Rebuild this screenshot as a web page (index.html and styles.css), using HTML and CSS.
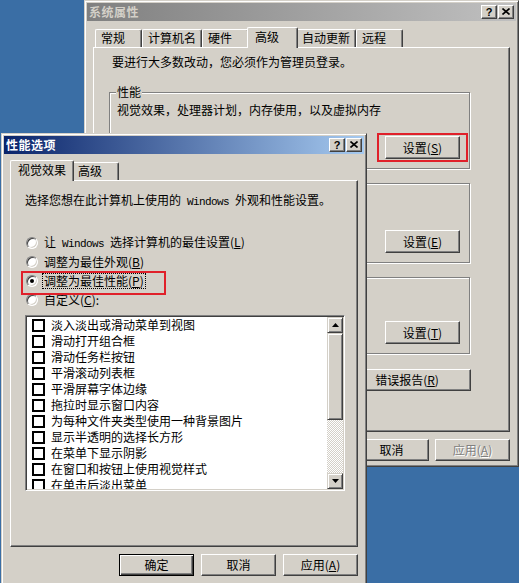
FILE: index.html
```html
<!DOCTYPE html>
<html lang="zh-CN">
<head>
<meta charset="utf-8">
<title>系统属性 - 性能选项</title>
<link rel="stylesheet" href="styles.css">
</head>
<body>
<div class="window win-sys inactive">
  <div class="titlebar">
    <span class="title">系统属性</span>
    <span class="tbtns">
      <span class="tbtn help">?</span>
      <span class="tbtn close"><svg width="8" height="7" viewBox="0 0 8 7"><path d="M0.5 0.5 L7.5 6.5 M7.5 0.5 L0.5 6.5" stroke="#000" stroke-width="1.6" fill="none"/></svg></span>
    </span>
  </div>
  <div class="tabstrip">
    <span class="tab">常规</span>
    <span class="tab">计算机名</span>
    <span class="tab">硬件</span>
    <span class="tab sel">高级</span>
    <span class="tab">自动更新</span>
    <span class="tab">远程</span>
  </div>
  <div class="panel sys-panel">
    <p class="intro">要进行大多数改动，您必须作为管理员登录。</p>
    <div class="group g-perf">
      <span class="legend">性能</span>
      <p class="desc">视觉效果，处理器计划，内存使用，以及虚拟内存</p>
      <button class="btn mark-btn">设置(<u>S</u>)</button>
    </div>
    <div class="group g-prof">
      <span class="legend">用户配置文件</span>
      <p class="desc">与您登录有关的桌面设置</p>
      <button class="btn">设置(<u>E</u>)</button>
    </div>
    <div class="group g-boot">
      <span class="legend">启动和故障恢复</span>
      <p class="desc">系统启动，系统失败和调试信息</p>
      <button class="btn">设置(<u>T</u>)</button>
    </div>
    <div class="panel-btns">
      <button class="btn wide">环境变量(<u>N</u>)</button>
      <button class="btn wide">错误报告(<u>R</u>)</button>
    </div>
  </div>
  <div class="dlg-btns">
    <button class="btn">确定</button>
    <button class="btn">取消</button>
    <button class="btn disabled">应用(<u>A</u>)</button>
  </div>
</div>

<div class="window win-perf active">
  <div class="titlebar">
    <span class="title">性能选项</span>
    <span class="tbtns">
      <span class="tbtn help">?</span>
      <span class="tbtn close"><svg width="8" height="7" viewBox="0 0 8 7"><path d="M0.5 0.5 L7.5 6.5 M7.5 0.5 L0.5 6.5" stroke="#000" stroke-width="1.6" fill="none"/></svg></span>
    </span>
  </div>
  <div class="tabstrip">
    <span class="tab sel first">视觉效果</span>
    <span class="tab">高级</span>
  </div>
  <div class="panel perf-panel">
    <p class="intro2">选择您想在此计算机上使用的<span class="lat"> Windows </span>外观和性能设置。</p>
    <div class="radios">
      <div class="radio-row"><span class="radio"></span><span class="rlabel">让<span class="lat"> Windows </span>选择计算机的最佳设置(<u>L</u>)</span></div>
      <div class="radio-row"><span class="radio"></span><span class="rlabel">调整为最佳外观(<u>B</u>)</span></div>
      <div class="radio-row mark-row"><span class="radio on"></span><span class="rlabel focus">调整为最佳性能(<u>P</u>)</span></div>
      <div class="radio-row"><span class="radio"></span><span class="rlabel">自定义(<u>C</u>):</span></div>
    </div>
    <div class="listbox">
      <div class="list">
        <div class="row"><span class="cb"></span>淡入淡出或滑动菜单到视图</div>
        <div class="row"><span class="cb"></span>滑动打开组合框</div>
        <div class="row"><span class="cb"></span>滑动任务栏按钮</div>
        <div class="row"><span class="cb"></span>平滑滚动列表框</div>
        <div class="row"><span class="cb"></span>平滑屏幕字体边缘</div>
        <div class="row"><span class="cb"></span>拖拉时显示窗口内容</div>
        <div class="row"><span class="cb"></span>为每种文件夹类型使用一种背景图片</div>
        <div class="row"><span class="cb"></span>显示半透明的选择长方形</div>
        <div class="row"><span class="cb"></span>在菜单下显示阴影</div>
        <div class="row"><span class="cb"></span>在窗口和按钮上使用视觉样式</div>
        <div class="row"><span class="cb"></span>在单击后淡出菜单</div>
      </div>
      <div class="scrollbar">
        <span class="sb-btn"><svg width="7" height="4" viewBox="0 0 7 4"><path d="M3.5 0 L7 4 L0 4 Z" fill="#000"/></svg></span>
        <span class="sb-thumb"></span>
        <span class="sb-track"></span>
        <span class="sb-btn"><svg width="7" height="4" viewBox="0 0 7 4"><path d="M0 0 L7 0 L3.5 4 Z" fill="#000"/></svg></span>
      </div>
    </div>
  </div>
  <div class="dlg-btns">
    <button class="btn default">确定</button>
    <button class="btn">取消</button>
    <button class="btn">应用(<u>A</u>)</button>
  </div>
</div>
</body>
</html>
```
FILE: styles.css
```css
* { box-sizing: border-box; }
html, body { margin: 0; padding: 0; }
body {
  width: 519px;
  height: 583px;
  overflow: hidden;
  position: relative;
  background: #3a6ea5;
  font-family: "Noto Sans CJK SC", "Noto Sans", sans-serif;
  font-size: 12px;
  line-height: 14px;
  color: #000;
}
p { margin: 0; }
u { text-decoration: underline; text-underline-offset: 1px; }

.lat {
  font-family: "Liberation Mono", monospace;
  font-size: 11px;
  letter-spacing: -0.6px;
  white-space: pre;
}

/* windows */
.window {
  position: absolute;
  background: #d4d0c8;
  border: 1px solid;
  border-color: #d4d0c8 #404040 #404040 #d4d0c8;
  box-shadow: inset 1px 1px #fff, inset -1px -1px #808080;
  padding: 2px;
  display: flex;
  flex-direction: column;
}
.win-sys { left: 84px; top: 0; width: 435px; height: 467px; }
.win-perf { left: 1px; top: 133px; width: 366px; height: 452px; }

.titlebar {
  flex: none;
  height: 18px;
  display: flex;
  align-items: center;
  padding: 0 2px;
}
.active .titlebar { background: linear-gradient(to right, #0a246a, #a6caf0); color: #fff; }
.inactive .titlebar { background: linear-gradient(to right, #808080, #c0c0c0); color: #d4d0c8; }
.title { flex: 1; font-weight: bold; letter-spacing: 0.5px; }
.tbtns { display: flex; gap: 1px; }
.tbtn {
  width: 16px;
  height: 14px;
  background: #d4d0c8;
  border: 1px solid;
  border-color: #fff #404040 #404040 #fff;
  box-shadow: inset -1px -1px #808080;
  display: flex;
  align-items: center;
  justify-content: center;
}
.tbtn.help {
  font-family: "Liberation Sans", sans-serif;
  font-weight: bold;
  font-size: 11px;
  line-height: 12px;
  color: #000;
  padding-bottom: 1px;
}
.tbtn.close svg { margin-bottom: 1px; }

/* tabs */
.tabstrip {
  flex: none;
  position: relative;
  z-index: 1;
  display: flex;
  align-items: flex-end;
  height: 20px;
  margin: 6px 0 0 8px;
}
.tab {
  height: 18px;
  min-width: 47px;
  padding: 0 5px;
  border: 1px solid #fff;
  border-bottom: none;
  border-right-color: #404040;
  border-radius: 2px 2px 0 0;
  box-shadow: inset -1px 0 #808080;
  line-height: 16px;
  white-space: nowrap;
  background: #d4d0c8;
}
.tab.sel {
  height: 21px;
  min-width: 51px;
  margin: 0 -2px -1px;
  padding: 0 7px;
  line-height: 18px;
  position: relative;
  z-index: 2;
}

.panel {
  flex: none;
  margin: 0 6px;
  border: 1px solid;
  border-color: #fff #404040 #404040 #fff;
  box-shadow: inset -1px -1px #808080;
}

/* system properties panel */
.sys-panel {
  height: 385px;
  padding: 7px 0 0 15px;
}
.intro { margin-left: 3px; }
.group {
  position: relative;
  width: 361px;
  border: 1px solid #808080;
  box-shadow: inset 1px 1px #fff, 1px 1px #fff;
  padding: 10px 9px 9px 7px;
  display: flex;
  flex-direction: column;
  align-items: flex-start;
}
.g-perf { height: 77px; margin-top: 23px; }
.g-prof { height: 80px; margin-top: 14px; }
.g-boot { height: 77px; margin-top: 14px; }
.group .btn { margin-top: auto; align-self: flex-end; }
.legend {
  position: absolute;
  top: -8px;
  left: 6px;
  padding: 0 1px;
  background: #d4d0c8;
}
.panel-btns {
  width: 362px;
  display: flex;
  justify-content: flex-end;
  gap: 8px;
  margin-top: 15px;
}

/* buttons */
.btn {
  width: 75px;
  height: 23px;
  padding: 0;
  margin: 0;
  font: inherit;
  line-height: 14px;
  color: #000;
  background: #d4d0c8;
  border: 1px solid;
  border-color: #fff #404040 #404040 #fff;
  box-shadow: inset -1px -1px #808080;
  border-radius: 0;
  display: flex;
  align-items: center;
  justify-content: center;
  white-space: nowrap;
}
.btn.wide { width: 128px; height: 22px; }
.btn.default {
  border-color: #000;
  box-shadow: inset 1px 1px #fff, inset -1px -1px #404040, inset -2px -2px #808080;
}
.btn.disabled { color: #808080; text-shadow: 1px 1px #fff; }

.dlg-btns {
  flex: none;
  display: flex;
  justify-content: flex-end;
  gap: 6px;
  margin: 7px 6px 0;
}
.dlg-btns .btn { height: 22px; }
.win-perf .dlg-btns { gap: 7px; }

/* red annotation marks */
.mark-btn { position: relative; }
.mark-btn::after {
  content: "";
  position: absolute;
  left: -9px;
  right: -9px;
  top: -4px;
  bottom: -4px;
  border: 2px solid #e0202a;
}
.mark-row { position: relative; }
.mark-row::after {
  content: "";
  position: absolute;
  left: -4px;
  top: 0;
  width: 141px;
  height: 20px;
  border: 2px solid #e0202a;
}

/* performance options panel */
.perf-panel {
  height: 367px;
  padding: 12px 0 0 14px;
}
.intro2 { white-space: nowrap; }
.radios { margin-top: 24px; }
.radio-row {
  height: 19px;
  display: flex;
  align-items: center;
  width: 300px;
}
.radio {
  flex: none;
  width: 12px;
  height: 12px;
  margin-left: 1px;
  margin-right: 5px;
  border-radius: 50%;
  border: 1px solid;
  border-color: #808080 #fff #fff #808080;
  box-shadow: inset 1px 1px #404040, inset -1px -1px #d4d0c8;
  background: #fff;
  display: flex;
  align-items: center;
  justify-content: center;
}
.radio.on::after {
  content: "";
  width: 4px;
  height: 4px;
  border-radius: 50%;
  background: #000;
}
.rlabel { white-space: nowrap; padding: 0 1px; }
.rlabel.focus { outline: 1px dotted #000; outline-offset: 0; }

.listbox {
  margin-top: 6px;
  width: 320px;
  height: 176px;
  border: 1px solid;
  border-color: #808080 #fff #fff #808080;
  box-shadow: inset 1px 1px #404040, inset -1px -1px #d4d0c8;
  background: #fff;
  padding: 1px;
  display: flex;
}
.list { flex: 1; overflow: hidden; }
.row {
  height: 16px;
  display: flex;
  align-items: center;
  padding-left: 5px;
  white-space: nowrap;
}
.cb {
  flex: none;
  width: 13px;
  height: 13px;
  margin-right: 6px;
  background: #fff;
  border: 2px solid #000;
}
.scrollbar {
  flex: none;
  width: 16px;
  display: flex;
  flex-direction: column;
}
.sb-btn, .sb-thumb {
  background: #d4d0c8;
  border: 1px solid;
  border-color: #d4d0c8 #404040 #404040 #d4d0c8;
  box-shadow: inset 1px 1px #fff, inset -1px -1px #808080;
}
.sb-btn {
  height: 16px;
  display: flex;
  align-items: center;
  justify-content: center;
}
.sb-thumb { height: 87px; }
.sb-track {
  flex: 1;
  background-image: conic-gradient(#fff 25%, #d4d0c8 0 50%, #fff 0 75%, #d4d0c8 0);
  background-size: 2px 2px;
}
```
